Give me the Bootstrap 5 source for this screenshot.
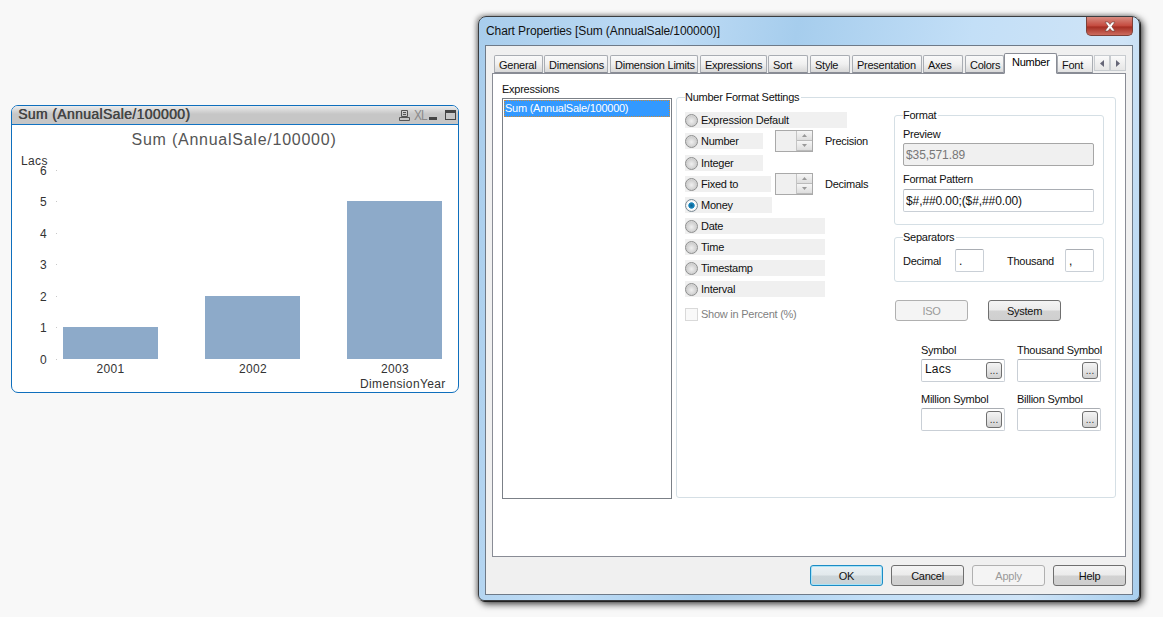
<!DOCTYPE html>
<html lang="en">
<head>
<meta charset="utf-8">
<title>Chart Properties</title>
<link href="https://cdn.jsdelivr.net/npm/bootstrap@5.3.0/dist/css/bootstrap.min.css" rel="stylesheet">
<style>
html,body{height:100%;margin:0}
body{background:#f8f8f8;font:11px/14px "Liberation Sans",Arial,sans-serif;letter-spacing:-.25px;color:#111;overflow:hidden;position:relative}
/* chart box */
.qv-box{position:absolute;left:11px;top:105px;width:448px;height:288px;background:#fff;border:1px solid #0f6fbd;border-radius:7px;overflow:hidden;letter-spacing:0}
.qv-head{height:19px;background:linear-gradient(#ececec,#c6c6c6 45%,#c6c6c6);border-bottom:1px solid #1273c2;padding-left:6px;font:14px/17px "Liberation Sans",sans-serif;color:#444;letter-spacing:.35px;text-shadow:.4px 0 0 #444}
.qv-head-ico{gap:4px;padding-right:1px;text-shadow:none}
.qv-head svg{display:block}
.qv-xl{display:block;width:11px;font:14px/17px "Liberation Sans",sans-serif;color:#8a8a8a;letter-spacing:-1px;transform:scaleX(.85);transform-origin:0 50%}
.qv-plot{display:block}
.qv-plot text{font-family:"Liberation Sans",sans-serif;font-size:12px;fill:#333;letter-spacing:.36px}
.qv-plot .qv-ctitle{font-size:16px;fill:#555;letter-spacing:.75px}
/* dialog */
.dlg{position:absolute;left:478px;top:16px;width:662px;height:585px;border:1px solid #3a3d40;border-radius:8px 8px 6px 6px;background:linear-gradient(100deg,#a8cdec 0,#bfdcf5 25%,#a6cded 42%,#c3dff7 65%,#cfe4f7 85%,#a9cfee 100%);box-shadow:1px 1px 0 #222,3px 3px 7px rgba(0,0,0,.75),-2px -1px 5px rgba(0,0,0,.35)}
.dlg-title{height:28px;padding:7px 0 0 7px;font-size:12px;letter-spacing:-.1px;color:#111;position:relative}
.dlg-close{position:absolute;right:6px;top:0;width:47px;height:19px;border:1px solid #7d4038;border-top:0;border-radius:0 0 5px 5px;background:linear-gradient(#d88b80,#c4493d 50%,#a52d22 55%,#cc6b5e);display:flex;align-items:center;justify-content:center}
.dlg-client{margin:0 6px 0 6px;height:550px;border:1px solid #6e7a88;background:#f0f0f0;padding-top:7px}
.tabs-strip{border:0;margin-left:8px;height:20px;flex-wrap:nowrap;align-items:flex-end}
.tabs-strip .nav-link{height:18px;padding:2px 0 0 4px;margin:0 2px 0 0;border:1px solid #a9adb3;border-bottom:1px solid #898c95;border-radius:2px 2px 0 0;background:linear-gradient(#fafafa,#f0f0f0 50%,#d8d8d8);color:#111;font-size:11px;line-height:14px;white-space:nowrap;overflow:hidden}
.tabs-strip .nav-item:nth-child(1) .nav-link{width:49px;margin-right:1px}
.tabs-strip .nav-item:nth-child(2) .nav-link{width:64px}
.tabs-strip .nav-item:nth-child(3) .nav-link{width:88px}
.tabs-strip .nav-item:nth-child(4) .nav-link{width:67px;margin-right:1px}
.tabs-strip .nav-item:nth-child(5) .nav-link{width:40px}
.tabs-strip .nav-item:nth-child(6) .nav-link{width:40px}
.tabs-strip .nav-item:nth-child(7) .nav-link{width:70px;margin-right:1px}
.tabs-strip .nav-item:nth-child(8) .nav-link{width:40px}
.tabs-strip .nav-item:nth-child(9) .nav-link{width:39px;margin-right:0}
.tabs-strip .nav-item:nth-child(10) .nav-link{width:53px;height:21px;margin:0 0 -1px;padding:1px 0 0 7px;background:#fff;border-color:#898c95;border-bottom-color:#fff;position:relative;z-index:1}
.tabs-strip .nav-item:nth-child(11) .nav-link{width:36px;margin-right:1px;background:linear-gradient(#fff,#f0f0f0 60%,#e2e2e2)}
.tab-arrows{margin-bottom:2px}
.tab-arrow{width:16px;height:16px;border:1px solid #c8ccd0;background:linear-gradient(#fafafa,#e6e6e6);display:flex;align-items:center;justify-content:center}
.tab-panel{margin:0 6px 0 6px;height:484px;background:#fff;border:1px solid #898c95;padding:8px 0 0 9px}
.expr-col{width:170px}
.expr-list{height:401px;border:1px solid #7b8087;margin-top:2px;padding:1px}
.expr-item{background:#3399ff;color:#fff;height:17px;padding:1px 0 0 1px;outline:1px dotted #c98a3c;outline-offset:-1px;border-radius:0}
.grp{border:1px solid #d5dfe5;border-radius:3px}
.grp-legend{margin-top:-8px;background:#fff;width:max-content;padding:0 2px 0 0;line-height:14px}
.grp-main{width:440px;height:401px;margin:15px 0 0 4px;padding:0 0 0 8px;flex:none}
.fmt-left{width:209px;flex:none;padding-top:8px}
.fmt-right{width:210px;flex:none;padding-top:11px}
.opt{height:16px;background:#f0f0f0;display:flex;align-items:center;white-space:nowrap;margin-bottom:5px;flex:none}
.opt-wide{width:162px}.opt-n{width:78px}.opt-f{width:86px}.opt-m{width:87px}.opt-d{width:140px}
.opt .form-check-input.rb{width:13px;height:13px;margin:0 3px 0 0;flex:none;border:1px solid #8e8f8f;background:radial-gradient(circle at 50% 55%,#f0f0f0,#cfcfcf 60%,#f2f2f2);box-shadow:none}
.opt .form-check-input.rb:checked{background:radial-gradient(circle,#0b5f8c 0,#1a88c0 36%,#fff 46%,#eee 70%,#d8d8d8);border-color:#7b8a94}
.opt-line{display:flex;height:16px;margin-bottom:5px;align-items:center}
.opt-line .opt{margin-bottom:0}
.opt-gap{margin-bottom:6px}
.spin{width:38px;height:22px;margin:-3px 12px -3px 12px;border:1px solid #a9a9a9;background:#f0f0f0;display:flex;justify-content:flex-end;flex:none}
.spin-f{margin-left:4px}
.spin-btns{width:16px;border-left:1px solid #c4c4c4;display:flex;flex-direction:column}
.spin-btns span{flex:1;background:linear-gradient(#f6f6f6,#dedede);border-bottom:1px solid #bbb;position:relative;display:flex;align-items:center;justify-content:center}
.chk-row{margin-top:10px;color:#7f7f7f;display:flex;align-items:center;height:14px}
.chk-row .form-check-input.cb{width:13px;height:13px;margin:0 3px 0 0;border:1px solid #b5b5b5;border-radius:0;background:#f4f4f4;flex:none}
.fmt-box{height:110px;padding:0 0 0 8px}
.fld-label{line-height:14px}
.win-input.form-control{display:block;height:23px;width:191px;min-height:0;border:1px solid #c9cfd6;border-top-color:#a9adb3;border-radius:2px;padding:0 2px;font-size:12px;letter-spacing:-.1px;line-height:21px;color:#111;background:#fff;box-shadow:none}
.win-input.form-control:disabled{background:#f0f0f0;color:#777;border-color:#a6a6a6}
.lbl-preview{margin-top:5px;margin-bottom:2px}
.lbl-pattern{margin-top:6px;margin-bottom:3px}
.sep-box{height:45px;margin-top:12px;padding-left:8px}
.sep-row{margin-top:5px;height:23px}
.sep-a{width:52px}.sep-b{width:58px;margin-left:23px}
.win-input.win-sm.form-control{width:29px;padding-left:3px}
.win-btn.btn{height:21px;width:73px;padding:1px 0 0;font-size:11px;letter-spacing:-.25px;line-height:18px;color:#111;border:1px solid #6f6f6f;border-radius:3px;background:linear-gradient(#f4f4f4,#ebebeb 48%,#d2d2d2 52%,#cfcfcf)}
.win-btn.btn:disabled{opacity:1;color:#9a9a9a;border-color:#b0b0b0;background:#f4f4f4}
.win-btn.btn-def{border-color:#1c8cc5;box-shadow:inset 0 0 0 1px #a9e3f7;background:linear-gradient(#eaf1f5,#e2e9ec 48%,#cdd6da 52%,#c8d2d6)}
.fmt-btns{margin:18px 0 0 1px;gap:20px}
.sym-grid{display:grid;grid-template-columns:84px 84px;column-gap:12px;row-gap:10px;margin:22px 0 0 27px}
.sym-lab{line-height:14px;margin-bottom:2px;white-space:nowrap}
.sym-field{height:23px;border:1px solid #c9cfd6;border-top-color:#a9adb3;border-radius:2px;padding:0 2px 0 3px;font-size:12px;letter-spacing:.2px;line-height:18px;background:#fff}
.dots.btn{width:16px;height:17px;padding:0;margin-top:2px;font-size:10px;line-height:15px;color:#333;border:1px solid #6f6f6f;border-radius:3px;background:linear-gradient(#f4f4f4,#e4e4e4 50%,#cfcfcf)}
.dlg-foot{margin:8px 6px 0 0;gap:8px}
</style>
</head>
<body>

<section class="qv-box">
  <div class="qv-head d-flex justify-content-between">
    <span>Sum (AnnualSale/100000)</span>
    <span class="qv-head-ico d-flex align-items-center">
      <svg width="11" height="11" viewBox="0 0 11 11" fill="none" stroke="#555"><path d="M2.500 .5h6v6h-6zM4 2.500h3M4 4.500h3M.5 7.500h10v3H.5z"/></svg>
      <span class="qv-xl">XL</span>
      <svg width="12" height="11" viewBox="0 0 12 11"><rect x="0" y="7" width="8" height="3" fill="#444"/></svg>
      <svg width="12" height="11" viewBox="0 0 12 11" fill="none" stroke="#444"><rect x=".5" y=".5" width="10" height="9"/><path d="M.5 2h10" stroke-width="2"/></svg>
    </span>
  </div>
  <svg class="qv-plot" width="446" height="268" viewBox="12 125 446 268" role="img" aria-label="Sum (AnnualSale/100000) bar chart">
    <text class="qv-ctitle" x="234" y="145" text-anchor="middle">Sum (AnnualSale/100000)</text>
    <text x="21" y="165">Lacs</text>
    <g text-anchor="end">
      <text x="47" y="175">6</text><text x="47" y="206">5</text><text x="47" y="238">4</text><text x="47" y="269">3</text><text x="47" y="301">2</text><text x="47" y="332">1</text><text x="47" y="364">0</text>
    </g>
    <g fill="#c8c8c8">
      <rect x="56" y="170" width="1" height="1"/><rect x="56" y="201" width="1" height="1"/><rect x="56" y="233" width="1" height="1"/><rect x="56" y="264" width="1" height="1"/><rect x="56" y="296" width="1" height="1"/><rect x="56" y="327" width="1" height="1"/><rect x="56" y="359" width="1" height="1"/>
    </g>
    <g fill="#8daac9">
      <rect x="63" y="327" width="95" height="32"/>
      <rect x="205" y="296" width="95" height="63"/>
      <rect x="347" y="201" width="95" height="158"/>
    </g>
    <g text-anchor="middle">
      <text x="110.500" y="373">2001</text><text x="253" y="373">2002</text><text x="395" y="373">2003</text>
    </g>
    <text x="360" y="388">DimensionYear</text>
  </svg>
</section>

<section class="dlg">
  <div class="dlg-title">Chart Properties [Sum (AnnualSale/100000)]
    <span class="dlg-close"><svg width="14" height="11" viewBox="0 0 14 11"><path d="M2 1h3l2 2.500L9 1h3L8.800 5.500 12 10H9L7 7.500 5 10H2l3.200-4.500z" fill="#fff" stroke="#6d3a34" stroke-width=".6"/></svg></span>
  </div>
  <div class="dlg-client">
    <ul class="nav nav-tabs tabs-strip">
      <li class="nav-item"><a class="nav-link" href="#">General</a></li>
      <li class="nav-item"><a class="nav-link" href="#">Dimensions</a></li>
      <li class="nav-item"><a class="nav-link" href="#">Dimension Limits</a></li>
      <li class="nav-item"><a class="nav-link" href="#">Expressions</a></li>
      <li class="nav-item"><a class="nav-link" href="#">Sort</a></li>
      <li class="nav-item"><a class="nav-link" href="#">Style</a></li>
      <li class="nav-item"><a class="nav-link" href="#">Presentation</a></li>
      <li class="nav-item"><a class="nav-link" href="#">Axes</a></li>
      <li class="nav-item"><a class="nav-link" href="#">Colors</a></li>
      <li class="nav-item"><a class="nav-link active" href="#">Number</a></li>
      <li class="nav-item"><a class="nav-link" href="#">Font</a></li>
      <li class="tab-arrows d-flex">
        <span class="tab-arrow"><svg width="4" height="7" viewBox="0 0 4 7"><path d="M4 0v7L0 3.500z" fill="#667"/></svg></span>
        <span class="tab-arrow"><svg width="4" height="7" viewBox="0 0 4 7"><path d="M0 0v7l4-3.500z" fill="#667"/></svg></span>
      </li>
    </ul>
    <div class="tab-panel d-flex">
      <div class="expr-col">
        <div>Expressions</div>
        <div class="expr-list"><div class="expr-item">Sum (AnnualSale/100000)</div></div>
      </div>
      <div class="grp grp-main">
        <div class="grp-legend">Number Format Settings</div>
        <div class="d-flex">
          <div class="fmt-left">
            <label class="opt opt-wide"><input class="form-check-input rb" type="radio" name="f">Expression Default</label>
            <div class="opt-line opt-gap"><label class="opt opt-n"><input class="form-check-input rb" type="radio" name="f">Number</label>
              <span class="spin"><span class="spin-btns"><span><svg width="5" height="3" viewBox="0 0 5 3"><path d="M0 3h5L2.500 0z" fill="#999"/></svg></span><span><svg width="5" height="3" viewBox="0 0 5 3"><path d="M0 0h5L2.500 3z" fill="#999"/></svg></span></span></span><span>Precision</span></div>
            <label class="opt opt-n"><input class="form-check-input rb" type="radio" name="f">Integer</label>
            <div class="opt-line"><label class="opt opt-f"><input class="form-check-input rb" type="radio" name="f">Fixed to</label>
              <span class="spin spin-f"><span class="spin-btns"><span><svg width="5" height="3" viewBox="0 0 5 3"><path d="M0 3h5L2.500 0z" fill="#999"/></svg></span><span><svg width="5" height="3" viewBox="0 0 5 3"><path d="M0 0h5L2.500 3z" fill="#999"/></svg></span></span></span><span>Decimals</span></div>
            <label class="opt opt-m"><input class="form-check-input rb" type="radio" name="f" checked>Money</label>
            <label class="opt opt-d"><input class="form-check-input rb" type="radio" name="f">Date</label>
            <label class="opt opt-d"><input class="form-check-input rb" type="radio" name="f">Time</label>
            <label class="opt opt-d"><input class="form-check-input rb" type="radio" name="f">Timestamp</label>
            <label class="opt opt-d"><input class="form-check-input rb" type="radio" name="f">Interval</label>
            <label class="chk-row"><input class="form-check-input cb" type="checkbox" disabled>Show in Percent (%)</label>
          </div>
          <div class="fmt-right">
            <div class="grp fmt-box">
              <div class="grp-legend">Format</div>
              <div class="fld-label lbl-preview">Preview</div>
              <input class="form-control win-input" value="$35,571.89" disabled>
              <div class="fld-label lbl-pattern">Format Pattern</div>
              <input class="form-control win-input" value="$#,##0.00;($#,##0.00)">
            </div>
            <div class="grp sep-box">
              <div class="grp-legend">Separators</div>
              <div class="sep-row d-flex align-items-center">
                <span class="sep-a">Decimal</span><input class="form-control win-input win-sm" value=".">
                <span class="sep-b">Thousand</span><input class="form-control win-input win-sm" value=",">
              </div>
            </div>
            <div class="fmt-btns d-flex">
              <button class="btn win-btn" disabled>ISO</button>
              <button class="btn win-btn">System</button>
            </div>
            <div class="sym-grid">
              <div><div class="sym-lab">Symbol</div><div class="sym-field d-flex justify-content-between"><span>Lacs</span><button class="btn dots">...</button></div></div>
              <div><div class="sym-lab">Thousand Symbol</div><div class="sym-field d-flex justify-content-end"><button class="btn dots">...</button></div></div>
              <div><div class="sym-lab">Million Symbol</div><div class="sym-field d-flex justify-content-end"><button class="btn dots">...</button></div></div>
              <div><div class="sym-lab">Billion Symbol</div><div class="sym-field d-flex justify-content-end"><button class="btn dots">...</button></div></div>
            </div>
          </div>
        </div>
      </div>
    </div>
    <div class="dlg-foot d-flex justify-content-end">
      <button class="btn win-btn btn-def">OK</button>
      <button class="btn win-btn">Cancel</button>
      <button class="btn win-btn" disabled>Apply</button>
      <button class="btn win-btn">Help</button>
    </div>
  </div>
</section>

</body>
</html>
